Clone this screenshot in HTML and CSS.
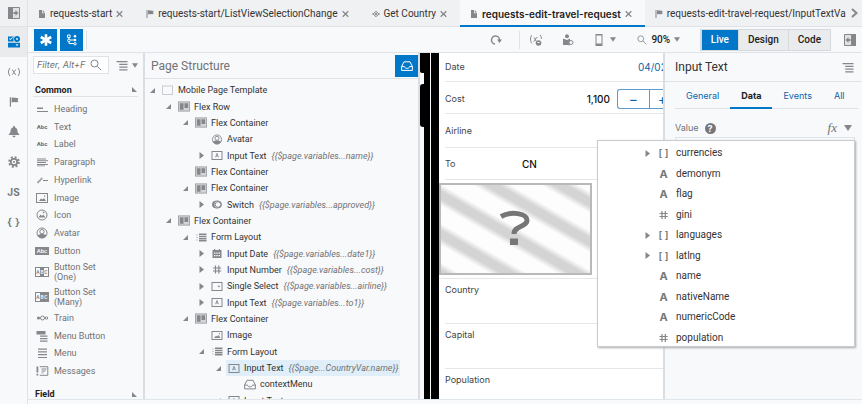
FILE: index.html
```html
<!DOCTYPE html>
<html lang="en">
<head>
<meta charset="utf-8">
<title>Page designer</title>
<link rel="stylesheet" href="styles.css">
</head>
<body>
<svg class="defs" aria-hidden="true">
  <symbol id="file" viewBox="0 0 8 10"><path d="M1 1h3v3.200h3V9H1zM4.800 1 7 3.400H4.800z"/></symbol>
  <symbol id="flag" viewBox="0 0 8 10"><path d="M.5 1h1v8h-1zM2 1.500c1.200-.8 2 .2 3 0l2.700.4-.7 1.600.7 1.600-2.900.2c-1-.5-1.800-.3-2.800.3z"/></symbol>
  <symbol id="node" viewBox="0 0 8 10"><path class="line" d="M4 2.200 6.800 5 4 7.800 1.200 5z"/><path d="M4 3.600 5.400 5 4 6.400 2.600 5zM0 4.500h1.500v1H0zM6.500 4.500H8v1H6.500z"/></symbol>
  <symbol id="x" viewBox="0 0 8 8"><path class="line" stroke-width="1.400" d="m.8.800 6.400 6.400M7.200.8.800 7.200"/></symbol>
  <symbol id="down" viewBox="0 0 8 6"><path d="M0 0h8L4 6z"/></symbol>
  <symbol id="open" viewBox="0 0 7 7"><path d="M6 1v5H1z"/></symbol>
  <symbol id="closed" viewBox="0 0 7 7"><path d="M1.500 0 6 3.500l-4.500 3.500z"/></symbol>
  <symbol id="corner" viewBox="0 0 7 7"><path d="M1 1v5h5z"/></symbol>
  <symbol id="search" viewBox="0 0 12 12"><circle class="line" cx="4.500" cy="4.500" r="3.500"/><path class="line" d="m7.200 7.200 4 4"/></symbol>
  <symbol id="outline" viewBox="0 0 12 12"><path d="M0 1h12v1.500H0zM3 4h9v1.500H3zM3 7h9v1.500H3zM3 10h9v1.500H3z"/></symbol>
  <symbol id="tray" viewBox="0 0 12 10"><path class="line" d="M.6 5.500 3 .8h6l2.400 4.700v3.900H.6zM.6 5.600H3.500C4 8 8 8 8.500 5.600h2.900"/></symbol>
  <symbol id="page" viewBox="0 0 12 10"><rect class="line pale" x=".5" y=".5" width="10" height="8.500"/></symbol>
  <symbol id="flex" viewBox="0 0 13 11"><rect x=".5" y=".5" width="12" height="10" fill="#d3d5d8" stroke="#a0a2a6"/><path d="M2 2h4v7H2zM7 2h4v5H7z"/></symbol>
  <symbol id="avatar" viewBox="0 0 12 12"><circle class="line" cx="6" cy="6" r="5"/><circle class="line" cx="6" cy="4.700" r="2.200"/><path d="M1.500 8.500c2-2 7-2 9 0C9 12 3 12 1.500 8.500z"/></symbol>
  <symbol id="input" viewBox="0 0 12 10"><rect class="line" x="1" y="1" width="10" height="8"/><path d="M5.500 2.800h1l1.300 4H7l-.3-.9H5.300l-.3.900h-.8zM6 3.700l-.5 1.500h1z"/></symbol>
  <symbol id="switch" viewBox="0 0 12 10"><rect class="line" x="1.500" y="1.500" width="9" height="7" rx="3.500"/><path d="M5 1.500C3 3 3 7 5 8.500 0 9 0 1 5 1.500z"/><circle class="line" cx="7" cy="5" r="2.800"/></symbol>
  <symbol id="form" viewBox="0 0 12 10"><path d="M4 1h7.500v1.500H4zM4 3.200h7.500v1.500H4zM4 5.400h7.500v1.500H4zM4 7.600h7.500v1.500H4z"/><path opacity=".4" d="M1 2h2v1H1zM1 4.500h2v1H1zM1 7h2v1H1z"/></symbol>
  <symbol id="calendar" viewBox="0 0 12 10"><path fill-rule="evenodd" d="M2 1.500h1V.5h1.200v1h3.600v-1H9v1h1.500v8H1.500v-8zM3 4v1.200h1.400V4zM5.300 4v1.200h1.400V4zM7.600 4v1.200H9V4zM3 6.500v1.300h1.400V6.500zM5.300 6.500v1.300h1.400V6.500zM7.600 6.500v1.300H9V6.500z"/></symbol>
  <symbol id="hash" viewBox="0 0 12 10"><path class="line" stroke-width="1.200" d="M4.500 1v8M7.800 1v8M2 3.500h8.200M2 6.500h8.200"/></symbol>
  <symbol id="select" viewBox="0 0 12 10"><rect class="line" x="1" y="1" width="10" height="8"/><path d="M6.500 4.200h2.800L7.900 6z"/></symbol>
  <symbol id="image" viewBox="0 0 12 10"><rect class="line" x="1" y="1" width="10" height="8"/><path d="m3 7.500 2-2.200 1 .8 1.500-1.500L9.500 7.500zM8.500 2.500l.8.800-.8.800-.8-.8z"/></symbol>
  <symbol id="imgbig" viewBox="0 0 14 12"><rect class="line" x="1.500" y="1.500" width="11" height="9"/><path d="m4 9 2-2.500 1.500 1L9 6l2 3zM9 3.500h1.200v1.200H9z"/></symbol>
  <symbol id="heading" viewBox="0 0 14 12"><path d="M2 4.500h6V6H2zM2 8h11v1H2z"/></symbol>
  <symbol id="para" viewBox="0 0 14 12"><path d="M2 2.500h9v1H2zM2 4.300h11v1H2zM2 6.100h9v1H2zM2 7.900h11v1H2zM2 9.500h8v.7H2z"/></symbol>
  <symbol id="hyper" viewBox="0 0 14 12"><path class="line" d="M2.500 8.500c0-2 2-1.200 2.500-2.500s2-3 2-1.500-1.500 1.500-2 2.500-1.500 2.500-2.500 1.500zM8 6.500h5"/></symbol>
  <symbol id="iconico" viewBox="0 0 14 12"><circle class="line" cx="7" cy="6" r="5"/><path d="m3.500 8.500 2-3 1.500 1.500 1.200-1.500L10.500 8.500zM7.500 3l1.500-.5.5 1.500-1.500.3z"/></symbol>
  <symbol id="train" viewBox="0 0 14 12"><path d="M2 5.600h11v.8H2z"/><circle cx="3.500" cy="6" r="1.500"/><circle cx="7.500" cy="6" r="2" fill="#f8f9fb" stroke="#85878b"/><circle cx="11.500" cy="6" r="1.200" fill="#f8f9fb" stroke="#85878b"/></symbol>
  <symbol id="menubtn" viewBox="0 0 14 12"><path d="M1.500 1h9v3.500h-9zM5 5.500h7.500v1.200H5zM5 8h7.500v1.200H5zM5 10.500h7.500v1.200H5z"/></symbol>
  <symbol id="menu" viewBox="0 0 14 12"><path d="M3 1.500h9v1.200H3zM3 4.300h9v1.200H3zM3 7.100h9v1.200H3zM3 9.900h9v1.200H3z"/></symbol>
  <symbol id="msg" viewBox="0 0 14 12"><path d="M1.500 1.500h1.800v6H1.500zM1.500 8.800h1.800v1.800H1.500zM6.500 3.500h5v1h-5zM6.500 5.500h4v1h-4zM6.500 7.500h2v.8h-2z"/><path class="line" d="M4.800 1.700h8v8.600h-8"/></symbol>
</svg>

<nav class="rail" aria-label="Sections">
  <button class="top" aria-label="Expand"><svg width="12" height="12" viewBox="0 0 12 12"><path d="M0 0h5v12H0z"/><path d="M5 .5h6.500v11H5" fill="#dfe1e3" stroke="#85878b"/><path d="M5.500 5h2V3.200L10.500 6 7.500 8.800V7h-2z"/></svg></button>
  <button class="on" aria-label="Components"><svg width="12" height="12" viewBox="0 0 12 12"><path fill-rule="evenodd" d="M0 .5h5.500v5H0zM1 2.800l1.500 1.500L5 1.500l-.7-.6-1.800 2.100-.8-.9zM0 6.800h12v4.700H0zM7.500 8.300h3L9 10.200z"/><circle class="line" cx="9" cy="3" r="2"/></svg></button>
  <button aria-label="Variables"><svg width="14" height="12" viewBox="0 0 14 12"><path class="line" d="M3 2C1 4.500 1 7.500 3 10M11 2c2 2.500 2 5.500 0 8M5 8.500c1.500 0 2.500-5 4-4.500M5 4c1.800-.3 2 4.800 4 4.500"/></svg></button>
  <button aria-label="Flows"><svg width="10" height="12"><use href="#flag"/></svg></button>
  <button aria-label="Events"><svg width="12" height="12" viewBox="0 0 12 12"><path d="M5.200 0h1.600v1.300C9 2 9.500 3.500 9.500 6L11.500 9H.5l2-3c0-2.500.5-4 2.700-4.700zM4.500 9.800h3c0 2-3 2-3 0z"/></svg></button>
  <button aria-label="Settings"><svg width="12" height="12" viewBox="0 0 12 12"><circle cx="6" cy="6" r="3.200" fill="none" stroke="#85878b" stroke-width="1.800"/><circle cx="6" cy="6" r="4.800" fill="none" stroke="#85878b" stroke-width="2" stroke-dasharray="2 1.770"/><circle cx="6" cy="6" r="1"/></svg></button>
  <button class="js">JS</button>
  <button class="braces">{ }</button>
</nav>

<div class="work">
  <header class="tabs">
    <button class="tab"><svg width="8" height="10"><use href="#file"/></svg>requests-start<svg width="7" height="8"><use href="#x"/></svg></button>
    <button class="tab"><svg width="8" height="10"><use href="#flag"/></svg>requests-start/ListViewSelectionChange<svg width="7" height="8"><use href="#x"/></svg></button>
    <button class="tab"><svg width="8" height="10"><use href="#node"/></svg>Get Country<svg width="7" height="8"><use href="#x"/></svg></button>
    <button class="tab current"><svg width="8" height="10"><use href="#file"/></svg>requests-edit-travel-request<svg width="7" height="8"><use href="#x"/></svg></button>
    <button class="tab last"><svg width="8" height="10"><use href="#flag"/></svg><span>requests-edit-travel-request/InputTextVa</span></button>
    <button class="more" aria-label="More tabs"><svg width="7" height="10" viewBox="0 0 7 10"><path class="thick" d="m1 1 4.500 4L1 9"/></svg></button>
  </header>

  <div class="toolbar">
    <button class="blue" aria-label="Components"><svg width="12" height="12" viewBox="0 0 12 12"><path d="M6 .3v11.400M.8 3l10.400 6M.8 9l10.400-6" stroke="#fff" stroke-width="2.600"/></svg></button>
    <button class="blue" aria-label="Structure"><svg width="12" height="12" viewBox="0 0 12 12"><path d="M3 3v6.500h5M3 6h5" fill="none" stroke="#fff"/><path class="ring" d="M1.500 1h2.600v2.600H1.500z"/><circle class="ring" cx="2.900" cy="6.400" r="1.300"/><circle class="wf" cx="9" cy="2.300" r="1.300"/><circle class="wf" cx="9" cy="6" r="1.300"/><circle class="ring" cx="9" cy="9.800" r="1.200"/></svg></button>
    <i class="sep"></i>
    <div class="tools">
      <button aria-label="Reload"><svg width="12" height="12" viewBox="0 0 12 12"><path class="line" stroke-width="1.500" d="M5 10A4 4 0 1 1 9.500 6"/><path d="M7 5.500h5L9.500 9z"/></svg></button>
      <i class="sep"></i>
      <button aria-label="Variables"><svg width="12" height="12" viewBox="0 0 12 12"><path class="line" d="M2 1C0 3 0 7 2 9.500M10 1c1.500 1.500 1.500 3 1.200 4M3.500 7.500c1.500 0 2-4.500 4-4M3.800 3.500c1.500 0 1.500 3 2.200 3.500"/><circle cx="8.500" cy="9" r="2.800"/><path d="M7.500 8.500h2" stroke="#fff"/></svg></button>
      <button aria-label="Role"><svg width="12" height="12" viewBox="0 0 12 12"><circle cx="5" cy="2.300" r="2"/><path d="M1 4.500 5 6l3-1.500v4L6.500 11H1z"/><circle cx="9" cy="8.500" r="2" fill="#f8f9fb" stroke="#85878b"/><path class="line" d="m7 11.500 1-1.500"/></svg></button>
      <button class="device" aria-label="Device"><svg width="8" height="12" viewBox="0 0 8 12"><path fill-rule="evenodd" d="M.5 0h7v12h-7zM1.500 1.500v8h5v-8z"/></svg><svg width="6" height="5"><use href="#down"/></svg></button>
      <button class="zoom"><svg width="10" height="10"><use href="#search"/></svg>90%<svg width="6" height="5"><use href="#down"/></svg></button>
      <div class="modes"><button class="live">Live</button><button>Design</button><button>Code</button></div>
      <button class="collapse" aria-label="Collapse"><svg width="12" height="12" viewBox="0 0 12 12"><path d="M7 0h5v12H7z"/><path d="M7 .5H.5v11H7" fill="#dfe1e3" stroke="#85878b"/><path d="M6.500 5h-2V3.200L1.500 6l3 2.800V7h2z"/></svg></button>
    </div>
  </div>

  <main>
    <aside class="palette">
      <div class="filter">
        <label><input type="text" placeholder="Filter, Alt+F" aria-label="Filter"><svg width="12" height="12"><use href="#search"/></svg></label>
        <svg width="12" height="11"><use href="#outline"/></svg><svg width="6" height="5"><use href="#down"/></svg>
      </div>
      <h2>Common<svg width="7" height="7"><use href="#corner"/></svg></h2>
      <ul class="items">
        <li><svg><use href="#heading"/></svg>Heading</li>
        <li><b>Abc</b>Text</li>
        <li><b>Abc</b>Label</li>
        <li><svg><use href="#para"/></svg>Paragraph</li>
        <li><svg><use href="#hyper"/></svg>Hyperlink</li>
        <li><svg><use href="#imgbig"/></svg>Image</li>
        <li><svg><use href="#iconico"/></svg>Icon</li>
        <li><svg><use href="#avatar"/></svg>Avatar</li>
        <li><b class="solid">Abc</b>Button</li>
        <li class="two"><b class="set"><i>A</i><i class="f">B</i><i>C</i></b><span>Button Set<br>(One)</span></li>
        <li class="two"><b class="set"><i>A</i><i class="f">B</i><i class="f">C</i></b><span>Button Set<br>(Many)</span></li>
        <li><svg><use href="#train"/></svg>Train</li>
        <li><svg><use href="#menubtn"/></svg>Menu Button</li>
        <li><svg><use href="#menu"/></svg>Menu</li>
        <li><svg><use href="#msg"/></svg>Messages</li>
      </ul>
      <h2 class="field">Field<svg width="7" height="7"><use href="#corner"/></svg></h2>
    </aside>

    <section class="structure">
      <div class="head"><h1>Page Structure</h1><button class="blue" aria-label="Context menus"><svg width="12" height="10"><use href="#tray"/></svg></button></div>
      <ul class="tree">
        <li><svg class="arrow"><use href="#open"/></svg><span><svg><use href="#page"/></svg>Mobile Page Template</span></li>
        <li class="l1"><svg class="arrow"><use href="#open"/></svg><span><svg><use href="#flex"/></svg>Flex Row</span></li>
        <li class="l2"><svg class="arrow"><use href="#open"/></svg><span><svg><use href="#flex"/></svg>Flex Container</span></li>
        <li class="l3"><i class="arrow"></i><span><svg><use href="#avatar"/></svg>Avatar</span></li>
        <li class="l3"><svg class="arrow"><use href="#closed"/></svg><span><svg><use href="#input"/></svg>Input Text<em>{{$page.variables...name}}</em></span></li>
        <li class="l2"><i class="arrow"></i><span><svg><use href="#flex"/></svg>Flex Container</span></li>
        <li class="l2"><svg class="arrow"><use href="#open"/></svg><span><svg><use href="#flex"/></svg>Flex Container</span></li>
        <li class="l3"><svg class="arrow"><use href="#closed"/></svg><span><svg><use href="#switch"/></svg>Switch<em>{{$page.variables...approved}}</em></span></li>
        <li class="l1"><svg class="arrow"><use href="#open"/></svg><span><svg><use href="#flex"/></svg>Flex Container</span></li>
        <li class="l2"><svg class="arrow"><use href="#open"/></svg><span><svg><use href="#form"/></svg>Form Layout</span></li>
        <li class="l3"><svg class="arrow"><use href="#closed"/></svg><span><svg><use href="#calendar"/></svg>Input Date<em>{{$page.variables...date1}}</em></span></li>
        <li class="l3"><svg class="arrow"><use href="#closed"/></svg><span><svg><use href="#hash"/></svg>Input Number<em>{{$page.variables...cost}}</em></span></li>
        <li class="l3"><svg class="arrow"><use href="#closed"/></svg><span><svg><use href="#select"/></svg>Single Select<em>{{$page.variables...airline}}</em></span></li>
        <li class="l3"><svg class="arrow"><use href="#closed"/></svg><span><svg><use href="#input"/></svg>Input Text<em>{{$page.variables...to1}}</em></span></li>
        <li class="l2"><svg class="arrow"><use href="#open"/></svg><span><svg><use href="#flex"/></svg>Flex Container</span></li>
        <li class="l3"><i class="arrow"></i><span><svg><use href="#image"/></svg>Image</span></li>
        <li class="l3"><svg class="arrow"><use href="#open"/></svg><span><svg><use href="#form"/></svg>Form Layout</span></li>
        <li class="l4"><svg class="arrow"><use href="#open"/></svg><span class="picked"><svg><use href="#input"/></svg>Input Text<em>{{$page...CountryVar.name}}</em></span></li>
        <li class="l5"><i class="arrow"></i><span><svg><use href="#tray"/></svg>contextMenu</span></li>
        <li class="l4"><svg class="arrow"><use href="#open"/></svg><span><svg><use href="#input"/></svg>Input Text</span></li>
      </ul>
    </section>

    <section class="preview">
      <div class="buttons"><i class="b1"></i><i class="b2"></i></div>
      <div class="bezel"></div>
      <div class="bezel wide"></div>
      <div class="screen">
        <div class="row date"><span>Date</span><a href="#">04/02</a></div>
        <div class="row cost"><label for="cost">Cost</label><input id="cost" type="text" value="1,100"><div class="step"><button>−</button><button>+</button></div></div>
        <div class="row airline"><span>Airline</span></div>
        <div class="row to"><label for="to">To</label><input id="to" type="text" value="CN"></div>
        <div class="row pic"><div class="placeholder"><svg viewBox="0 0 32 36" width="32" height="36"><path d="M1 5.500C11 0 27 2 27 9.500c0 6.500-13 5-13 13.500" fill="none" stroke="#767676" stroke-width="5"/><path d="M10 27.500h8V34h-8z" fill="#767676"/></svg></div></div>
        <div class="row tall">Country</div>
        <div class="row tall">Capital</div>
        <div class="row end">Population</div>
      </div>
    </section>

    <aside class="props">
      <div class="title"><h1>Input Text</h1><svg width="12" height="11"><use href="#outline"/></svg></div>
      <div class="ptabs"><button>General</button><button class="sel">Data</button><button>Events</button><button>All</button></div>
      <div class="value"><label for="val">Value</label><b class="help">?</b><span class="fx">fx</span><svg width="10" height="6"><use href="#down"/></svg></div>
      <input id="val" class="val" type="text">
      <div class="menu">
        <ul>
          <li><svg class="arrow"><use href="#closed"/></svg><b>[ ]</b>currencies</li>
          <li><i class="arrow"></i><b class="a">A</b>demonym</li>
          <li><i class="arrow"></i><b class="a">A</b>flag</li>
          <li><i class="arrow"></i><svg class="h"><use href="#hash"/></svg>gini</li>
          <li><svg class="arrow"><use href="#closed"/></svg><b>[ ]</b>languages</li>
          <li><svg class="arrow"><use href="#closed"/></svg><b>[ ]</b>latlng</li>
          <li><i class="arrow"></i><b class="a">A</b>name</li>
          <li><i class="arrow"></i><b class="a">A</b>nativeName</li>
          <li><i class="arrow"></i><b class="a">A</b>numericCode</li>
          <li><i class="arrow"></i><svg class="h"><use href="#hash"/></svg>population</li>
        </ul>
      </div>
    </aside>
  </main>
</div>
</body>
</html>
```
FILE: styles.css
```css
* { box-sizing: border-box; }
body {
  --ink: #85878b;
  --accent: #0077c8;
  margin: 0;
  height: 100vh;
  display: flex;
  overflow: hidden;
  background: #f8f9fb;
  color: #333;
  font: 9px/12px Roboto, "Liberation Sans", sans-serif;
}
h1, h2, ul { margin: 0; padding: 0; list-style: none; font-weight: 400; }
button, input { font: inherit; color: inherit; border: 0; padding: 0; margin: 0; background: none; border-radius: 0; min-width: 0; }
button { display: flex; align-items: center; justify-content: center; }
svg { flex: none; fill: #85878b; overflow: visible; }
a { text-decoration: none; }
.defs { position: absolute; width: 0; height: 0; }
.line { fill: none; stroke: var(--ink); }
.thick { fill: none; stroke: #85878b; stroke-width: 2; }
.pale { stroke: #c9ccd0; }
.wf { fill: #fff; }
.ring { fill: var(--accent); stroke: #fff; }
.sep { width: 1px; height: 18px; background: #e0e3e6; }

.rail { flex: 0 0 28px; border-right: 1px solid #dfe3e7; display: flex; flex-direction: column; }
.rail button { height: 30px; color: #75777b; }
.rail .top { height: 27px; background: #f0f1f3; border-bottom: 1px solid #dfe3e7; }
.rail .on { background: #e9ebed; --ink: var(--accent); }
.rail .on svg { fill: var(--accent); }
.rail .on .line { stroke-width: 2; }
.rail .js { font: 700 10px/12px Inter, sans-serif; }
.rail .braces { font: 600 11px/12px Inter, sans-serif; }

.work { flex: 1; min-width: 0; display: flex; flex-direction: column; }
.tabs { display: flex; height: 27px; flex: none; background: #f0f1f3; border-bottom: 1px solid #dfe3e7; font-size: 10px; }
.tab { flex: none; gap: 4px; padding: 2px 13px 0 10px; white-space: nowrap; height: 27px; border-bottom: 2px solid transparent; }
.tab.current { background: #f8f9fb; border-bottom-color: var(--accent); font-family: Inter, sans-serif; font-weight: 600; color: #222; }
.tab.last { flex: 1; min-width: 0; padding-right: 0; justify-content: flex-start; }
.tab.last span { overflow: hidden; }
.more { flex: none; width: 16px; }

.toolbar { display: flex; align-items: center; height: 26px; flex: none; padding-left: 6px; gap: 3px; border-bottom: 1px solid #dfe3e7; }
.blue { width: 23px; height: 22px; background: var(--accent); --ink: #fff; }
.tools { display: flex; flex: 1; align-items: center; justify-content: flex-end; padding-right: 6px; }
.tools > button { width: 32px; }
.tools > .sep { margin: 0 0 0 7px; }
.tools .device { gap: 7px; width: 22px; margin: 0 18px 0 11px; }
.tools .zoom { gap: 4px; width: 48px; margin-right: 17px; font-size: 10px; font-weight: 500; color: #222; }
.modes { display: flex; height: 22px; border: 1px solid #d6d9dc; font-size: 10px; font-weight: 500; }
.modes button { padding: 0 9px; background: #e9ebed; border-left: 1px solid #d6d9dc; color: #222; }
.modes .live { background: var(--accent); color: #fff; }
.tools .collapse { width: 12px; margin-left: 13px; }

main { flex: 1; min-height: 0; display: flex; margin-bottom: 4px; border-bottom: 1px solid #dfe6ec; }
.palette { flex: 0 0 117px; border-right: 2px solid #dadee3; padding: 3px 5px 0; color: #707276; overflow: hidden; }
.filter { display: flex; align-items: center; gap: 4px; height: 18px; }
.filter label { display: flex; align-items: center; width: 76px; height: 18px; margin-right: 3px; padding: 0 6px 0 3px; background: #fff; border: 1px solid #dfe3e7; }
.filter input { flex: 1; font-family: Inter, sans-serif; font-style: italic; color: #707276; }
.filter input::placeholder { color: #707276; opacity: 1; }
.palette h2 { display: flex; align-items: center; justify-content: space-between; height: 14px; margin-top: 9px; padding-left: 2px; border-bottom: 1px solid #dfe3e7; font-size: 9px; line-height: 12px; font-weight: 700; color: #222; }
.palette h2.field { height: 12px; margin-top: 8px; border: 0; }
.items { display: flex; flex-direction: column; height: 280px; margin-top: 3px; line-height: 10px; }
.items li { flex: 18 1 0; min-height: 0; display: flex; align-items: center; padding-left: 2px; gap: 5px; }
.items .two { flex-grow: 25; }
.items svg { width: 14px; height: 12px; }
.items b { width: 14px; flex: none; font-size: 6px; line-height: 8px; text-align: center; font-weight: 800; }
.items .solid { background: #85878b; color: #fff; font-weight: 500; }
.items .set { display: flex; border: 1px solid #85878b; height: 10px; font-weight: 500; }
.items .set i { flex: 1; font-style: normal; font-size: 5px; }
.items .set .f { background: #85878b; color: #fff; }

.structure { flex: 1 1 276px; min-width: 0; border-right: 2px solid #dadee3; display: flex; flex-direction: column; overflow: hidden; }
.head { display: flex; flex: none; justify-content: space-between; align-items: center; height: 26px; padding-left: 6px; border-bottom: 1px solid #dfe3e7; }
.head h1 { font-size: 12px; color: #707276; }
.tree { display: flex; flex-direction: column; flex: none; height: 327px; margin-top: 3px; white-space: nowrap; }
.tree li { flex: 1 1 0; min-height: 0; display: flex; padding-left: 4px; gap: 4px; align-items: center; }
.tree .l1 { padding-left: 20px; }
.tree .l2 { padding-left: 37px; }
.tree .l3 { padding-left: 53px; }
.tree .l4 { padding-left: 70px; }
.tree .l5 { padding-left: 86px; }
.arrow { flex: none; width: 7px; height: 7px; }
.tree span { display: flex; align-items: center; align-self: stretch; gap: 4px; padding: 0 2px; }
.tree span svg { width: 12px; height: 11px; }
.tree .picked { background: #dfeef8; }
.tree em { color: #707276; margin-left: 1px; }

.preview { flex: 0 0 243px; display: flex; background: #f8f9fb; overflow: hidden; font-family: Inter, sans-serif; }
.buttons { flex: 0 0 4px; display: flex; flex-direction: column; gap: 11px; }
.buttons i { background: #000; }
.b1 { height: 20px; border-bottom-left-radius: 2px; }
.b2 { height: 43px; border-radius: 3px 0 0 3px; }
.bezel { flex: 0 0 6px; background: #000; margin-right: 1px; }
.bezel.wide { flex-basis: 8px; margin: 0; }
.screen { flex: 1; min-width: 0; background: #fff; color: #444; overflow: hidden; }
.row { display: flex; align-items: center; margin-left: 6px; border-bottom: 1px solid #e6e7e9; }
.date { height: 29px; }
.date span, .cost label { flex: 1; }
.date a { width: 25px; font-size: 10px; color: #0b64a8; white-space: nowrap; }
.cost { height: 32px; padding-top: 2px; }
.cost input { width: 40px; margin-right: 7px; text-align: right; font-size: 10px; font-weight: 500; color: #111; }
.step { display: flex; flex: none; width: 46px; height: 20px; border: 1px solid #5b9bcd; border-right: 0; border-radius: 3px 0 0 3px; overflow: hidden; color: #0b64a8; font-size: 14px; }
.step button { flex: 0 0 31px; }
.step button + button { border-left: 1px solid #5b9bcd; flex-basis: 26px; }
.airline { height: 34px; }
.to { height: 32px; }
.to label { flex: 0 0 77px; }
.to input { width: 60px; font-size: 10px; font-weight: 500; color: #111; }
.pic { height: 99px; margin-left: 0; }
.placeholder {
  width: 153px; height: 92px; display: flex; align-items: center; justify-content: center;
  border: 2px solid #b9b9b9;
  background: repeating-linear-gradient(30deg, #d4d4d4 0, #d4d4d4 3px, #fdfdfd 9px, #fdfdfd 24px, #d4d4d4 30px, #d4d4d4 34px);
}
.tall { height: 45px; padding-top: 5px; align-items: flex-start; }
.end { padding-top: 5px; border: 0; }

.props { flex: 0 0 199px; position: relative; border-left: 2px solid #dadee3; background: #f8f9fb; font-family: Inter, sans-serif; }
.title { display: flex; align-items: center; justify-content: space-between; height: 29px; padding: 0 8px 0 10px; border-bottom: 1px solid #dfe3e7; }
.title h1 { font: 12px/14px Roboto, sans-serif; }
.ptabs { display: flex; height: 27px; margin: 0 4px 0 10px; border-bottom: 1px solid #dfe3e7; color: #0b64a8; }
.ptabs button { height: 27px; padding: 2px 11px 0; border-bottom: 2px solid transparent; }
.ptabs .sel { color: #222; font-weight: 700; border-bottom-color: var(--accent); }
.value { display: flex; align-items: center; height: 28px; padding: 10px 9px 0 10px; color: #707276; }
.help { width: 11px; height: 11px; margin-left: 6px; border-radius: 50%; background: #75777b; color: #fff; line-height: 11px; text-align: center; }
.fx { flex: 1; padding-right: 6px; text-align: right; font: italic 13px/14px "Liberation Serif", serif; }
.val { display: block; width: 180px; height: 20px; margin-left: 10px; border: 1px solid #dfe3e7; }
.menu { position: absolute; top: 87px; right: 7px; width: 258px; height: 207px; overflow: hidden; background: #fff; border: 1px solid #c8cccf; box-shadow: 1px 1px 2px #aaa; font: 10px/12px Roboto, sans-serif; }
.menu ul { display: flex; flex-direction: column; height: 205px; margin-top: 2px; }
.menu li { flex: 1 1 0; min-height: 0; display: flex; align-items: center; padding-left: 46px; }
.menu .arrow { margin-right: 6px; }
.menu b { width: 13px; margin-right: 6px; text-align: center; color: #75777b; font-family: Inter, sans-serif; font-weight: 600; }
.menu .a { font-size: 11px; font-weight: 700; }
.menu .h { width: 13px; height: 10px; margin-right: 6px; }
```
